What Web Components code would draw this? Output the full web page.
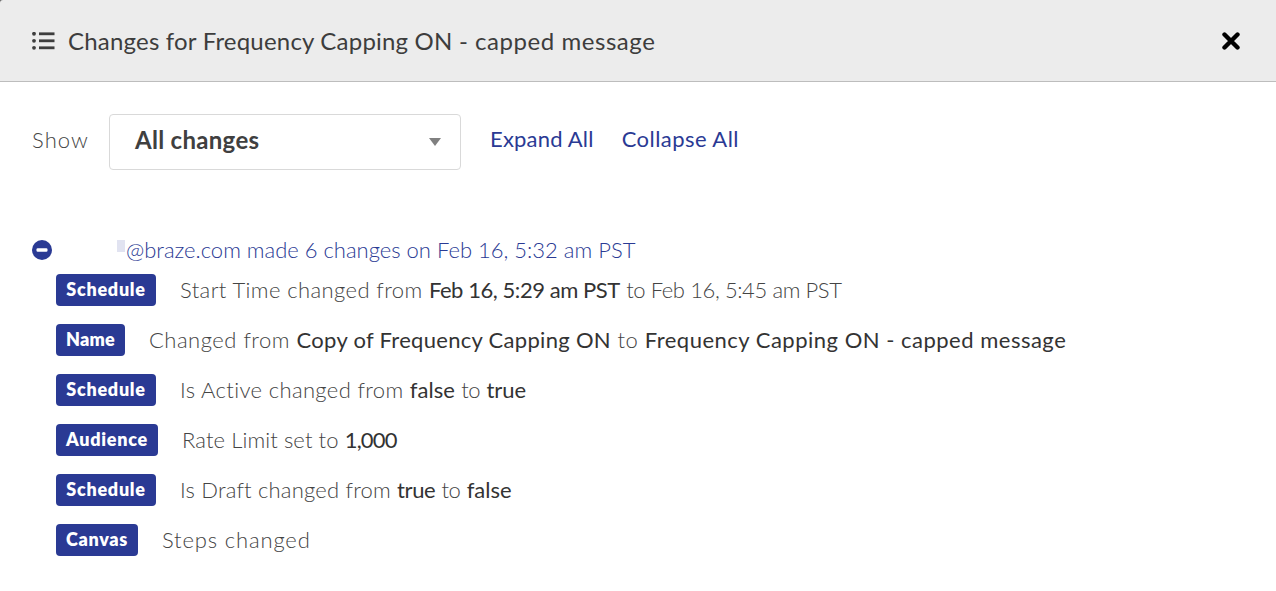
<!DOCTYPE html>
<html>
<head>
<meta charset="utf-8">
<title>Changes</title>
<style>
  html, body { margin: 0; background: #fff; }
  body { font-family: Lato, "Liberation Sans", sans-serif; color: #3d3d3d; }
  b { font-weight: 400; color: #333; }
  b.tight { letter-spacing: -.45px; }
  b.flat { letter-spacing: 0; }
  b.snug { letter-spacing: -.4px; }
  b.num { letter-spacing: -.8px; }
  b.first { letter-spacing: .3px; }
  .tight { letter-spacing: -.4px; }
  .title-end { letter-spacing: .55px; }
</style>
</head>
<body>
<changes-modal>
  <modal-header slot="header">Changes for Frequency Capping ON <span class="title-end">- capped message</span></modal-header>
  <filter-bar slot="filters"></filter-bar>
  <change-group slot="log" summary="@braze.com made 6 changes on Feb 16, 5:32 am PST">
    <change-row tag="Schedule" style="--w:100px">Start Time changed from <b class="tight">Feb 16, 5:29 am PST</b> <span class="tight">to Feb 16, 5:45 am PST</span></change-row>
    <change-row tag="Name" style="--w:69px;--ls:.25px;--t:.5px">Changed from <b class="first">Copy of Frequency Capping ON</b> to <b>Frequency Capping ON - capped message</b></change-row>
    <change-row tag="Schedule" style="--w:100px;--t:.36px">Is Active changed from <b class="flat">false</b> <span class="tight">to</span> <b class="flat">true</b></change-row>
    <change-row tag="Audience" style="--w:102px;--t:.1px">Rate Limit set to <b class="num">1,000</b></change-row>
    <change-row tag="Schedule" style="--w:100px;--t:.2px">Is Draft changed from <b class="snug">true</b> <span class="tight">to</span> <b class="flat">false</b></change-row>
    <change-row tag="Canvas" style="--w:82px;--t:.85px">Steps changed</change-row>
  </change-group>
</changes-modal>

<script>
// modal shell
class ChangesModal extends HTMLElement {
  constructor() {
    super();
    this.attachShadow({ mode: 'open' }).innerHTML = `
      <style>
        :host { display: block; height: 591px; overflow: hidden; background: #666; }
        .body { padding: 32px 32px 0; background: #fff; height: 509px; box-sizing: border-box; }
        .log { margin-top: 68px; }
      </style>
      <slot name="header"></slot>
      <div class="body">
        <slot name="filters"></slot>
        <div class="log"><slot name="log"></slot></div>
      </div>`;
  }
}

class ModalHeader extends HTMLElement {
  constructor() {
    super();
    this.attachShadow({ mode: 'open' }).innerHTML = `
      <style>
        :host { display: flex; align-items: center; box-sizing: border-box; height: 82px;
          padding: 0 36px 0 32px; background: #ececec; border-bottom: 1px solid #bdbdbd; border-top-left-radius: 3px; }
        svg { display: block; flex: none; }
        .icon { margin-right: 13px; }
        .title { flex: 1; font-size: 24px; letter-spacing: .2px; color: #3d3d3d; white-space: nowrap; }
      </style>
      <svg class="icon" width="23" height="18" viewBox="0 0 23 18" fill="#3d3d3d">
        <circle cx="2" cy="1.8" r="1.9"/><circle cx="2" cy="8.8" r="1.9"/><circle cx="2" cy="15.8" r="1.9"/>
        <rect x="7" y=".4" width="15.5" height="2.8"/><rect x="7" y="7.4" width="15.5" height="2.8"/><rect x="7" y="14.4" width="15.5" height="2.8"/>
      </svg>
      <div class="title"><slot></slot></div>
      <svg width="18" height="18" viewBox="0 0 18 18" stroke="#000" stroke-width="4.4" stroke-linecap="round">
        <path d="M2.5 2.5 15.5 15.5M15.5 2.5 2.5 15.5"/>
      </svg>`;
  }
}

class FilterBar extends HTMLElement {
  constructor() {
    super();
    this.attachShadow({ mode: 'open' }).innerHTML = `
      <style>
        :host { display: flex; align-items: center; height: 56px; }
        .label { width: 77px; font-size: 22px; font-weight: 300; letter-spacing: 1.1px; color: #444; padding-bottom: 6px; }
        .select { display: flex; align-items: center; justify-content: space-between; box-sizing: border-box;
          width: 352px; height: 56px; padding: 0 19px 0 25px; border: 1px solid #d9d9d9; border-radius: 4px;
          font-size: 24px; font-weight: 700; letter-spacing: .3px; color: #404040; }
        .select span { padding-bottom: 6px; }
        .arrow { width: 0; height: 0; border-left: 6px solid transparent; border-right: 6px solid transparent; border-top: 8px solid #808080; }
        a { font-size: 22px; color: #2a3a94; text-decoration: none; padding-bottom: 7px; }
        .expand { margin-left: 29px; letter-spacing: .2px; }
        .collapse { margin-left: 28px; letter-spacing: .45px; }
      </style>
      <span class="label">Show</span>
      <div class="select"><span>All changes</span><i class="arrow"></i></div>
      <a class="expand" href="#">Expand All</a>
      <a class="collapse" href="#">Collapse All</a>`;
  }
}

class ChangeGroup extends HTMLElement {
  constructor() {
    super();
    this.attachShadow({ mode: 'open' }).innerHTML = `
      <style>
        :host { display: block; }
        .head { display: flex; align-items: center; height: 24px; color: #2a3a94; font-size: 22px; font-weight: 300; white-space: nowrap; }
        svg { flex: none; }
        .redacted { width: 8px; height: 12px; margin: 2px 1px 0 65px; background: #e1e3f1; align-self: flex-start; }
        .summary { padding-bottom: 2px; }
        .rows { display: flex; flex-direction: column; gap: 18px; margin: 12px 0 0 24px; }
      </style>
      <div class="head">
        <svg width="20" height="20" viewBox="0 0 20 20"><circle cx="10" cy="10" r="10" fill="#2a3a94"/><rect x="4.5" y="8.2" width="11" height="3.6" rx="1.2" fill="#fff"/></svg>
        <span class="redacted"></span><span class="summary"></span>
      </div>
      <div class="rows"><slot></slot></div>`;
    this.shadowRoot.querySelector('.summary').textContent = this.getAttribute('summary');
  }
}

class ChangeRow extends HTMLElement {
  constructor() {
    super();
    this.attachShadow({ mode: 'open' }).innerHTML = `
      <style>
        :host { display: flex; align-items: center; height: 32px; font-size: 22px; font-weight: 300; color: #444; white-space: nowrap; letter-spacing: var(--t, .4px); }
        .tag { box-sizing: border-box; width: var(--w); height: 32px; margin-right: 24px; line-height: 31px; text-align: center;
          background: #2a3a94; color: #fff; border-radius: 4px; font-size: 18px; font-weight: 800; letter-spacing: var(--ls, .7px); }
        .text { padding-bottom: 1px; }
      </style>
      <span class="tag"></span><span class="text"><slot></slot></span>`;
    this.shadowRoot.querySelector('.tag').textContent = this.getAttribute('tag');
  }
}

customElements.define('changes-modal', ChangesModal);
customElements.define('modal-header', ModalHeader);
customElements.define('filter-bar', FilterBar);
customElements.define('change-group', ChangeGroup);
customElements.define('change-row', ChangeRow);
</script>
</body>
</html>
